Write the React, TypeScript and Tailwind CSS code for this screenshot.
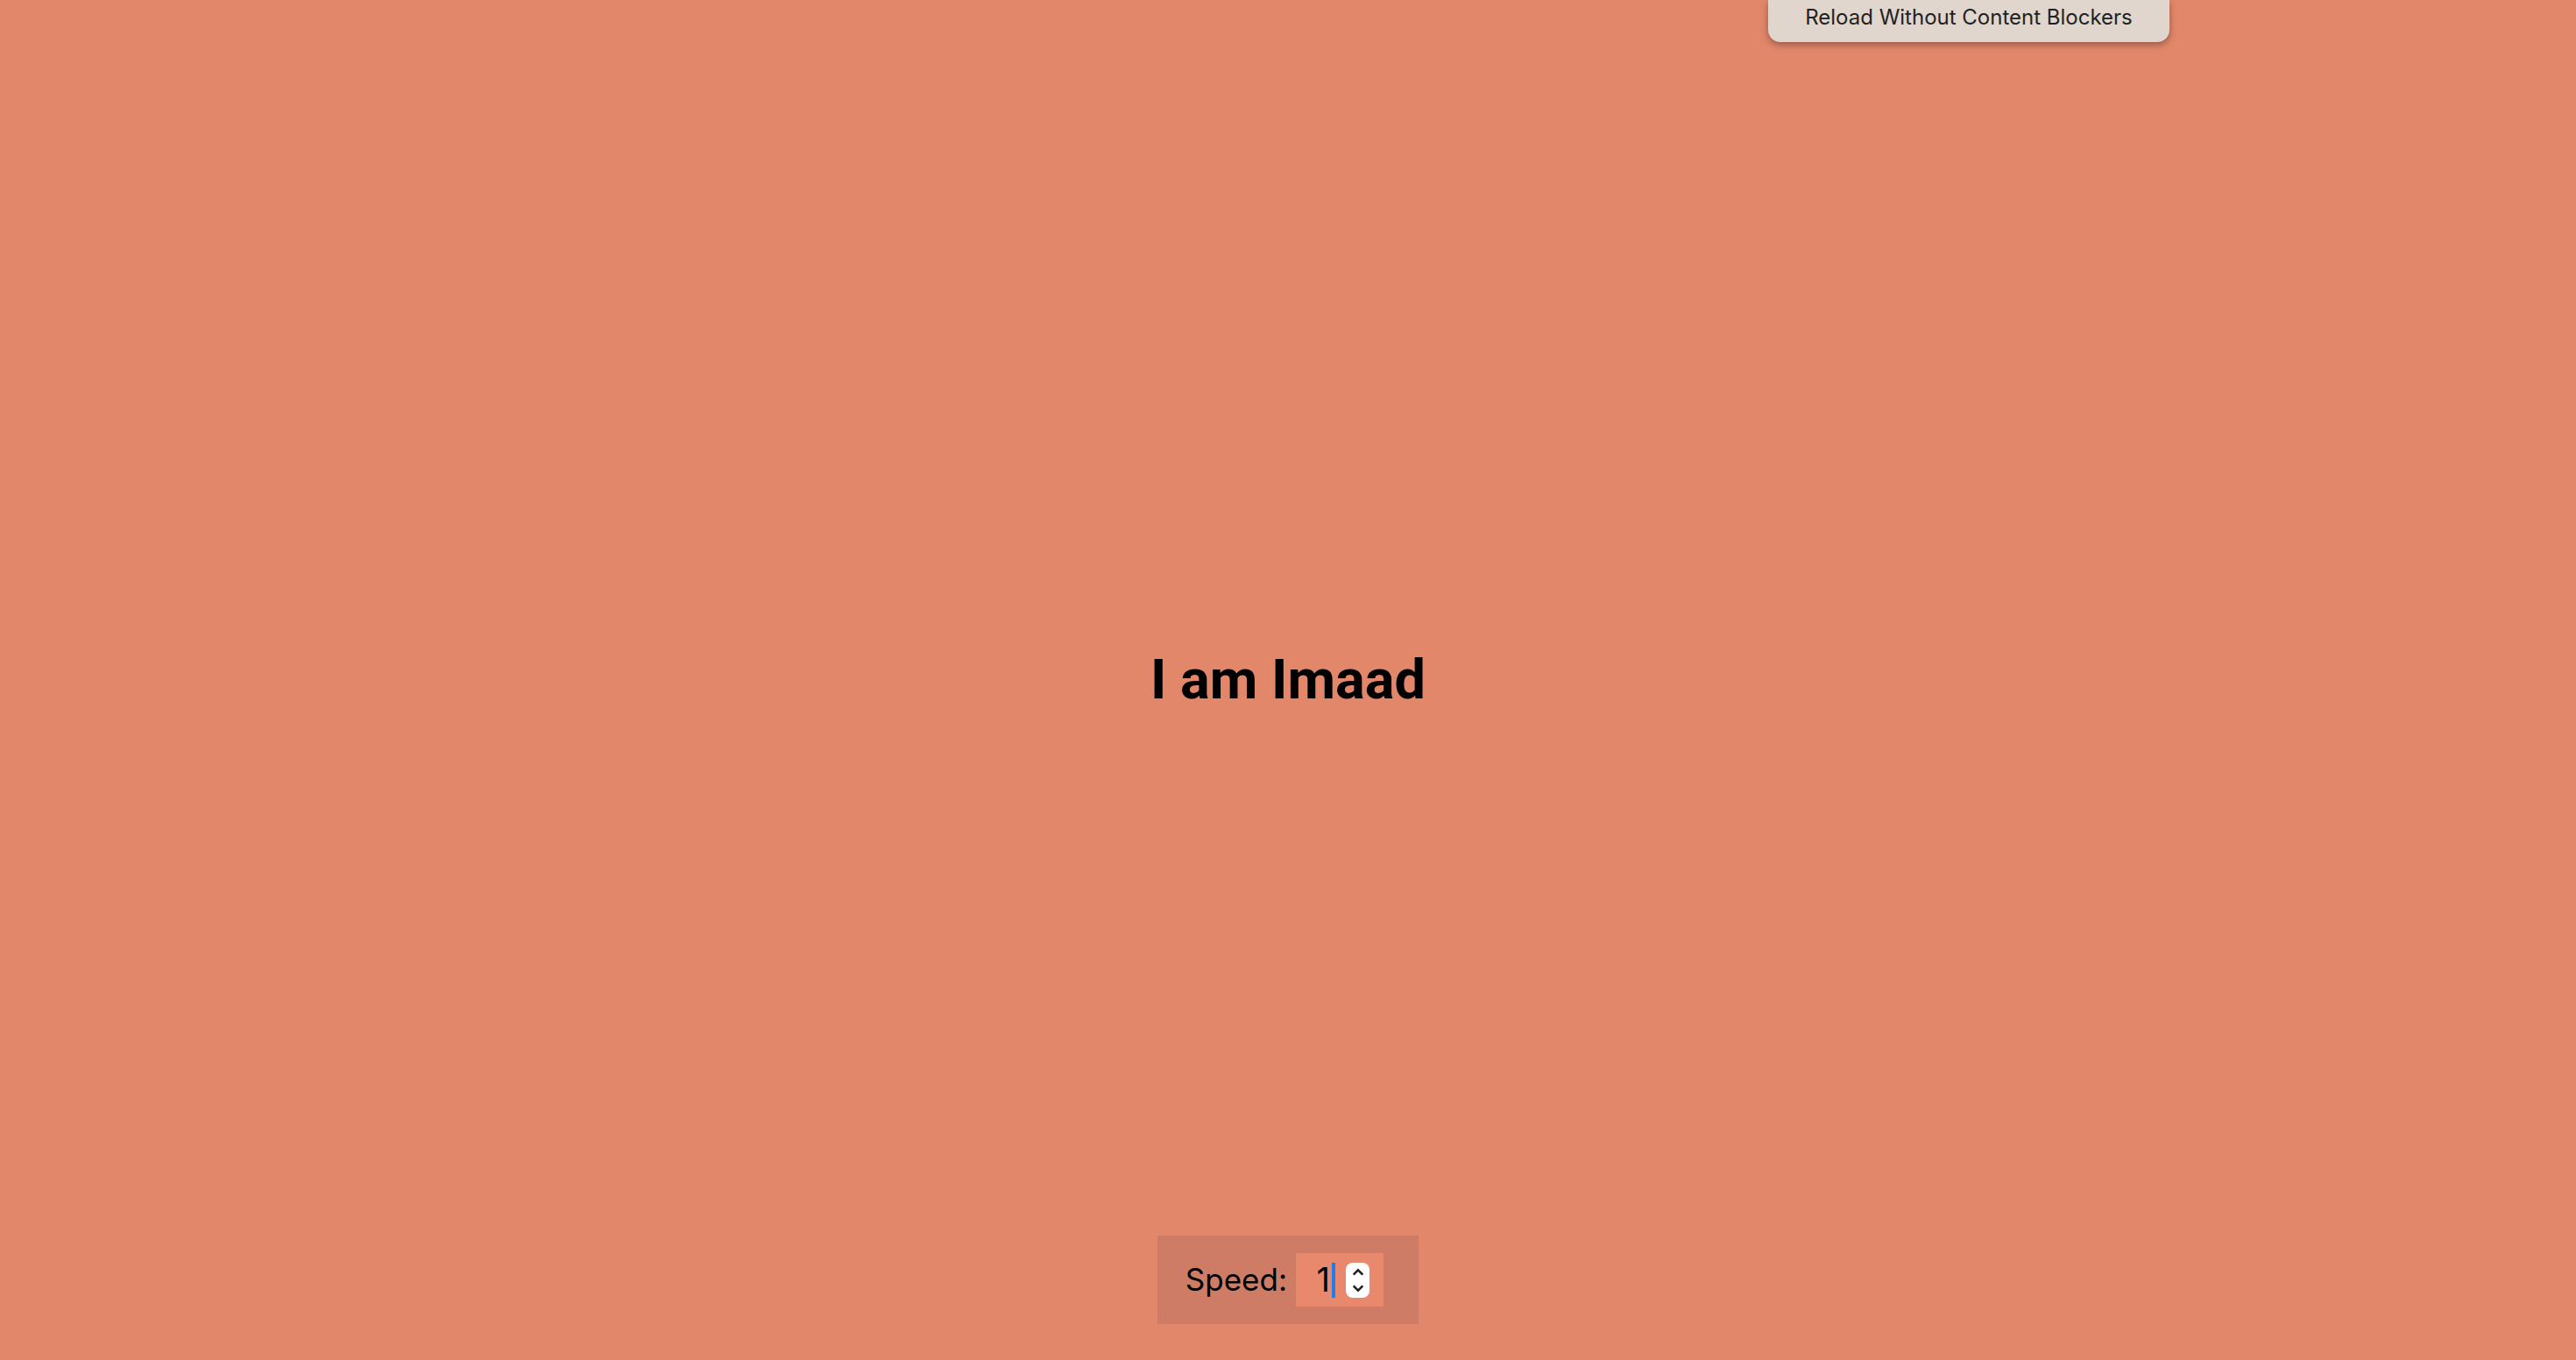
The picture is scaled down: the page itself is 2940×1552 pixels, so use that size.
export default function App() {
  return (
    <div className="relative w-full h-[1552px] bg-[#e3876b] flex flex-col items-center overflow-hidden" style={{ fontFamily: 'Roboto, "Liberation Sans", sans-serif' }}>
      <div className="absolute top-0 left-[2018px] w-[458px] h-[48px] rounded-b-[14px] bg-[#e0d6ce] shadow-[0_3px_8px_rgba(0,0,0,0.35)] flex items-center justify-center text-[24px] text-[#222] pb-[8px]" style={{ fontFamily: 'Inter, "Liberation Sans", sans-serif' }}>
        Reload Without Content Blockers
      </div>
      <div className="flex-1 flex items-center justify-center pt-[140px]">
        <h1 className="text-[63px] font-bold text-black leading-none">I am Imaad</h1>
      </div>
      <div className="mb-[41px] w-[298px] h-[101px] bg-[#cf7c66] flex items-center justify-end gap-[10px] pr-[40px]">
        <span className="text-[35px] text-black" style={{ fontFamily: 'Inter, "Liberation Sans", sans-serif' }}>Speed:</span>
        <div className="w-[100px] h-[61px] bg-[#e8896e] flex items-center justify-end pr-[16px] gap-[12px]">
          <span className="text-[38px] text-black flex items-center" style={{ fontFamily: 'Inter, "Liberation Sans", sans-serif' }}>
            1<span className="w-[4px] h-[40px] bg-[#1f7cf0] ml-[2px]" />
          </span>
          <div className="w-[27px] h-[40px] rounded-[8px] bg-white flex flex-col items-center justify-center">
            <svg width="18" height="17" viewBox="0 0 16 16"><path d="M3 10l5-5 5 5" stroke="#222" strokeWidth="2.4" fill="none" /></svg>
            <svg width="18" height="17" viewBox="0 0 16 16"><path d="M3 6l5 5 5-5" stroke="#222" strokeWidth="2.4" fill="none" /></svg>
          </div>
        </div>
      </div>
    </div>
  );
}
